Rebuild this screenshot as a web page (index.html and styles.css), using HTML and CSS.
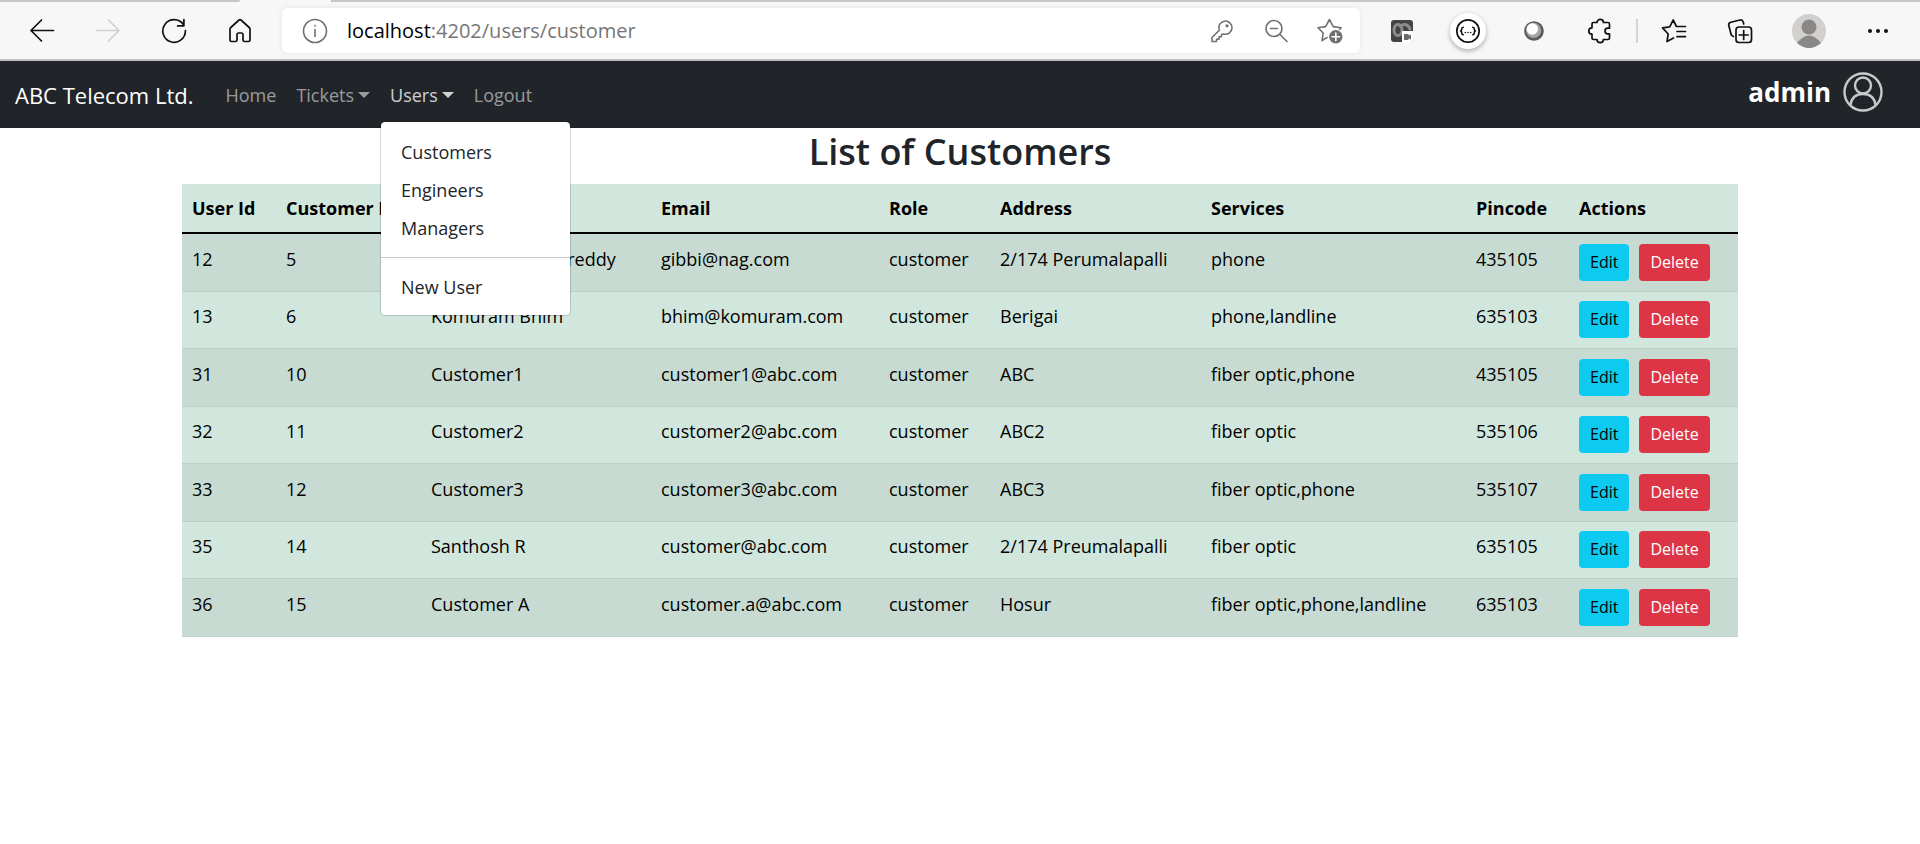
FILE: index.html
```html
<!DOCTYPE html>
<html lang="en">
<head>
<meta charset="utf-8">
<title>ABC Telecom Ltd.</title>
<link rel="stylesheet" href="styles.css">
</head>
<body>
<div class="browser">
  <div class="tabstrip"><span class="tabstrip-rest-left"></span><span class="tabstrip-active"></span><span class="tabstrip-rest"></span></div>
  <div class="toolbar">
    <div class="nav-buttons">
      <button class="icon-btn" aria-label="Back"><svg width="26" height="26" viewBox="0 0 26 26"><path d="M24.500 12.500H2M12.500 2L2 12.500L12.500 23"/></svg></button>
      <button class="icon-btn faded" aria-label="Forward"><svg width="26" height="26" viewBox="0 0 26 26"><path d="M1.500 12.500H24M13.500 2L24 12.500L13.500 23"/></svg></button>
      <button class="icon-btn" aria-label="Refresh"><svg width="26" height="26" viewBox="0 0 26 26"><path d="M22.500 6.700A11.300 11.300 0 1 0 24.400 12.500M22.900 1.500v6.300h-6.300"/></svg></button>
      <button class="icon-btn" aria-label="Home"><svg width="26" height="26" viewBox="0 0 26 26"><path d="M3 11.200q0-1 .8-1.700L12 2q1-.8 2 0l8.200 7.500q.8.700.8 1.700V22q0 1.500-1.500 1.500h-4Q16 23.500 16 22v-5.500Q16 15 14.500 15h-3Q10 15 10 16.500V22q0 1.500-1.500 1.500h-4Q3 23.500 3 22z"/></svg></button>
    </div>
    <div class="address">
      <button class="icon-btn gray" aria-label="Site information"><svg width="26" height="26" viewBox="0 0 26 26"><circle cx="13" cy="13" r="11.500"/><path d="M13 11.500V18.500M13 7.500v.5"/></svg></button>
      <div class="url"><span class="host">localhost</span>:4202/users/customer</div>
      <button class="icon-btn gray" aria-label="Passwords"><svg width="26" height="26" viewBox="0 0 26 26"><path d="M10.300 12.200A6.600 6.600 0 1 1 14.500 16l-2 .5v2.300H10v2.400H7.500v2.300H3v-4z"/><circle cx="18" cy="7.800" r=".8"/></svg></button>
      <button class="icon-btn gray" aria-label="Zoom"><svg width="26" height="26" viewBox="0 0 26 26"><circle cx="11" cy="10.500" r="8"/><path d="M7.500 10.500h7M17 16.500l7 7"/></svg></button>
      <button class="icon-btn gray" aria-label="Add to favorites"><svg width="26" height="26" viewBox="0 0 26 26"><path d="M10 19.500l-5 3.200 1.200-7.700L1 9.800l7.600-1.200L12.500 1.500l3.700 7.100 8 1.200-1.500 1.500"/><circle cx="18.800" cy="18.800" r="6.700" class="solid"/><path d="M15 18.800h7.600M18.800 15v7.600" class="cut"/></svg></button>
    </div>
    <div class="extensions">
      <button class="icon-btn" aria-label="Recorder extension"><svg width="26" height="26" viewBox="0 0 26 26"><rect x="2" y="2" width="22" height="22" rx="3" class="dark"/><ellipse cx="9" cy="12" rx="4" ry="5.500" class="loop"/><path d="M11 8q7-4 10 3" class="loop"/><path d="M13 13h11v9q0 2-2 2h-9z" class="white"/><path d="M15 16h4.500v1.500l2.500-1v5l-2.500-1V22H15z" class="camera"/></svg></button>
      <button class="icon-btn raised" aria-label="JSON extension"><svg width="26" height="26" viewBox="0 0 26 26"><circle cx="13" cy="13" r="11.200"/><g class="thin"><path d="M8.300 9.300q-1.600 0-1.600 1.700 0 2-1.200 2 1.200 0 1.200 2 0 1.700 1.600 1.700M17.700 9.300q1.600 0 1.600 1.700 0 2 1.200 2-1.200 0-1.200 2 0 1.700-1.600 1.700"/></g><g class="dots"><circle cx="10.300" cy="14.500" r=".8"/><circle cx="13" cy="14.500" r=".8"/><circle cx="15.700" cy="14.500" r=".8"/></g></svg></button>
      <button class="icon-btn" aria-label="Orb extension"><svg width="26" height="26" viewBox="0 0 26 26"><circle cx="13" cy="13" r="9.800" class="orb"/><circle cx="12.600" cy="12.400" r="7.600" class="orb-mid"/><circle cx="11.300" cy="11" r="5.700" class="orb-light"/></svg></button>
      <button class="icon-btn" aria-label="Extensions"><svg width="26" height="26" viewBox="0 0 26 26"><path d="M6.500 4.500H10a3.200 3.200 0 0 1 6.400 0H21q1.500 0 1.500 1.500v4.200h-1.700a2.800 2.800 0 0 0 0 5.600h1.700V20q0 1.500-1.500 1.500h-4.600a3.200 3.200 0 0 1-6.400 0H6.500Q5 21.500 5 20v-3.800a3.200 3.200 0 0 1 0-6.400V6q0-1.500 1.500-1.500z"/></svg></button>
      <span class="separator"></span>
      <button class="icon-btn" aria-label="Favorites"><svg width="26" height="26" viewBox="0 0 26 26"><path d="M12.500 20L6 23.500l1.200-7.500L1.500 9.800l7.200-1L12.200 2l3.200 6.500h9.100M16 13.500h8.500M16 18.700h8.500"/></svg></button>
      <button class="icon-btn" aria-label="Collections"><svg width="26" height="26" viewBox="0 0 26 26"><rect x="9" y="9" width="15.500" height="15.500" rx="3"/><path d="M16.700 12.500v9M12.200 17h9M6.500 18.500Q4.500 18 4 16L1.800 7.500Q1.200 5 3.800 4.300L13 2q2.500-.6 3.200 2l.5 2"/></svg></button>
      <button class="icon-btn avatar" aria-label="Profile"><svg width="34" height="34" viewBox="0 0 34 34"><circle cx="17" cy="17" r="17" class="av-bg"/><circle cx="17" cy="13" r="7.500" class="av-fg"/><path d="M5 29q12-15 24 0-12 10-24 0z" class="av-fg"/></svg></button>
      <button class="icon-btn" aria-label="Settings and more"><svg width="26" height="26" viewBox="0 0 26 26"><g class="dots"><circle cx="5" cy="13" r="2"/><circle cx="13" cy="13" r="2"/><circle cx="21" cy="13" r="2"/></g></svg></button>
    </div>
  </div>
</div>

<nav class="navbar">
  <a class="brand" href="#">ABC Telecom Ltd.</a>
  <ul class="menu">
    <li><a href="#">Home</a></li>
    <li><a class="toggle" href="#">Tickets</a></li>
    <li class="dropdown">
      <a class="toggle open" href="#">Users</a>
      <ul class="dropdown-menu">
        <li><a href="#">Customers</a></li>
        <li><a href="#">Engineers</a></li>
        <li><a href="#">Managers</a></li>
        <li class="divider"></li>
        <li><a href="#">New User</a></li>
      </ul>
    </li>
    <li><a href="#">Logout</a></li>
  </ul>
  <div class="account">
    <span>admin</span>
    <svg width="40" height="40" viewBox="0 0 40 40"><circle cx="20" cy="20" r="18.500"/><circle cx="20" cy="13.500" r="8"/><path d="M7.500 33Q9 22 20 22t12.500 11"/></svg>
  </div>
</nav>

<main class="content">
  <h1>List of Customers</h1>
  <table class="customers">
    <colgroup><col class="c-user"><col class="c-customer"><col class="c-name"><col class="c-email"><col class="c-role"><col class="c-address"><col class="c-services"><col class="c-pin"><col class="c-actions"></colgroup>
    <thead>
      <tr><th>User Id</th><th>Customer Id</th><th>Name</th><th>Email</th><th>Role</th><th>Address</th><th>Services</th><th>Pincode</th><th>Actions</th></tr>
    </thead>
    <tbody>
      <tr><td>12</td><td>5</td><td>Gibbi Nagarjunareddy</td><td>gibbi@nag.com</td><td>customer</td><td>2/174 Perumalapalli</td><td>phone</td><td>435105</td><td><div class="actions"><button class="btn edit">Edit</button><button class="btn delete">Delete</button></div></td></tr>
      <tr><td>13</td><td>6</td><td>Komuram Bhim</td><td>bhim@komuram.com</td><td>customer</td><td>Berigai</td><td>phone,landline</td><td>635103</td><td><div class="actions"><button class="btn edit">Edit</button><button class="btn delete">Delete</button></div></td></tr>
      <tr><td>31</td><td>10</td><td>Customer1</td><td>customer1@abc.com</td><td>customer</td><td>ABC</td><td>fiber optic,phone</td><td>435105</td><td><div class="actions"><button class="btn edit">Edit</button><button class="btn delete">Delete</button></div></td></tr>
      <tr><td>32</td><td>11</td><td>Customer2</td><td>customer2@abc.com</td><td>customer</td><td>ABC2</td><td>fiber optic</td><td>535106</td><td><div class="actions"><button class="btn edit">Edit</button><button class="btn delete">Delete</button></div></td></tr>
      <tr><td>33</td><td>12</td><td>Customer3</td><td>customer3@abc.com</td><td>customer</td><td>ABC3</td><td>fiber optic,phone</td><td>535107</td><td><div class="actions"><button class="btn edit">Edit</button><button class="btn delete">Delete</button></div></td></tr>
      <tr><td>35</td><td>14</td><td>Santhosh R</td><td>customer@abc.com</td><td>customer</td><td>2/174 Preumalapalli</td><td>fiber optic</td><td>635105</td><td><div class="actions"><button class="btn edit">Edit</button><button class="btn delete">Delete</button></div></td></tr>
      <tr><td>36</td><td>15</td><td>Customer A</td><td>customer.a@abc.com</td><td>customer</td><td>Hosur</td><td>fiber optic,phone,landline</td><td>635103</td><td><div class="actions"><button class="btn edit">Edit</button><button class="btn delete">Delete</button></div></td></tr>
    </tbody>
  </table>
</main>
</body>
</html>
```
FILE: styles.css
```css
* { box-sizing: border-box; }
body {
  margin: 0;
  background: #fff;
  color: #212529;
  font: 18px/30px "Open Sans", "Noto Sans", sans-serif;
}
a { color: inherit; text-decoration: none; }
ul { list-style: none; margin: 0; padding: 0; }
button { font: inherit; cursor: pointer; }

/* Browser toolbar */
.browser { background: #f7f7f7; border-bottom: 2px solid #bdbdbd; }
.tabstrip { display: flex; height: 2px; }
.tabstrip-rest-left { width: 240px; background: #c6c6c6; border-radius: 0 0 2px 0; }
.tabstrip-active { width: 91px; }
.tabstrip-rest { flex: 1; background: #c6c6c6; }
.toolbar { display: flex; align-items: center; height: 57px; padding: 0 20px; }
.nav-buttons { display: flex; gap: 22px; width: 262px; }
.icon-btn {
  display: flex;
  align-items: center;
  justify-content: center;
  width: 44px;
  height: 44px;
  padding: 0;
  border: 0;
  border-radius: 50%;
  background: transparent;
}
.icon-btn svg { fill: none; stroke: #111; stroke-width: 1.7px; stroke-linejoin: round; stroke-linecap: round; }
.icon-btn.faded svg { stroke: #cfcfcf; }
.icon-btn.gray svg { stroke: #707070; stroke-width: 1.6px; }
.icon-btn svg .solid { fill: #707070; stroke: none; }
.icon-btn svg .cut { stroke: #fff; }
.icon-btn svg .dark { fill: #444; stroke: none; }
.icon-btn svg .loop { stroke: #8c8c8c; stroke-width: 3px; }
.icon-btn svg .white { fill: #fff; stroke: none; }
.icon-btn svg .camera { fill: #6a6a6a; stroke: none; }
.icon-btn svg .thin { stroke-width: 1.6px; }
.icon-btn svg .orb { fill: #5b5b5b; stroke: none; }
.icon-btn svg .orb-mid { fill: #a5a5a5; stroke: none; }
.icon-btn svg .orb-light { fill: #fff; stroke: none; }
.icon-btn svg .av-bg { fill: #d2d0ce; stroke: none; }
.icon-btn svg .av-fg { fill: #8a8886; stroke: none; }
.icon-btn svg .dots { fill: #111; stroke: none; }
.icon-btn.avatar { margin: 0 3px; }
.icon-btn.raised { width: 36px; height: 36px; margin: 0 4px; background: #fff; box-shadow: 0 2px 5px rgba(0, 0, 0, .3); }
.address {
  display: flex;
  flex: 1;
  align-items: center;
  gap: 10px;
  height: 45px;
  padding: 0 8px 0 11px;
  border-radius: 6px;
  background: #fff;
  box-shadow: 0 0 6px rgba(0, 0, 0, .08);
}
.url { flex: 1; color: #767676; font-size: 20px; white-space: nowrap; }
.host { color: #000; }
.extensions { display: flex; align-items: center; gap: 22px; margin-left: 20px; }
.separator { width: 2px; height: 24px; margin: 0 -8px; background: #d4d4d4; }

/* Site navigation */
.navbar { display: flex; align-items: center; min-height: 67px; padding: 0 37px 0 15px; background: #212529; }
.brand { margin-right: 22px; color: #fff; font-size: 22px; }
.menu { display: flex; }
.menu > li > a { display: block; padding: 10px; color: rgba(255, 255, 255, .55); }
.menu > li > .open { color: rgba(255, 255, 255, .8); }
.toggle::after {
  content: "";
  display: inline-block;
  margin-left: 4px;
  border: 6px solid transparent;
  border-top-color: currentColor;
  border-bottom: 0;
  vertical-align: 4px;
}
.dropdown { position: relative; }
.dropdown-menu {
  position: absolute;
  top: 51px;
  left: 0;
  z-index: 5;
  width: 191px;
  padding: 11px 0 9px;
  border: 1px solid rgba(0, 0, 0, .15);
  border-radius: 5px;
  background: #fff;
  background-clip: padding-box;
  color: #212529;
}
.dropdown-menu a { display: block; padding: 4px 20px; }
.divider { height: 1px; margin: 10px 0; background: #c8c8c8; }
.account { display: flex; align-items: center; gap: 12px; margin-left: auto; padding-bottom: 5px; color: #fff; font-size: 26px; font-weight: 700; }
.account svg { fill: none; stroke: #c9c9c9; stroke-width: 2.4px; }

/* Customer table */
.content { padding: 0 182px; }
h1 { margin: 0 0 8px; font-size: 36px; font-weight: 600; line-height: 48px; text-align: center; }
.customers { width: 100%; table-layout: fixed; border-collapse: separate; border-spacing: 0; background: #d1e7dd; color: #000; }
.customers th, .customers td { padding: 9px 10px; text-align: left; vertical-align: top; white-space: nowrap; }
.customers th { border-bottom: 2px solid #000; font-weight: 700; }
.customers td { padding: 10px; border-bottom: 1px solid #bcd0c7; }
.customers tbody tr:nth-child(odd) { background: #c7dbd2; }
.customers tbody tr:nth-child(even) td { padding-top: 9px; }
.c-user { width: 94px; }
.c-customer { width: 145px; }
.c-name { width: 230px; }
.c-email { width: 228px; }
.c-role { width: 111px; }
.c-address { width: 211px; }
.c-services { width: 265px; }
.c-pin { width: 103px; }
.c-actions { width: 169px; }
.actions { display: flex; gap: 10px; }
.btn { height: 37px; padding: 0 11px; border: 0; border-radius: 4px; font-size: 16px; line-height: 37px; }
.edit { background: #0dcaf0; color: #000; }
.delete { background: #dc3545; color: #fff; }
```
